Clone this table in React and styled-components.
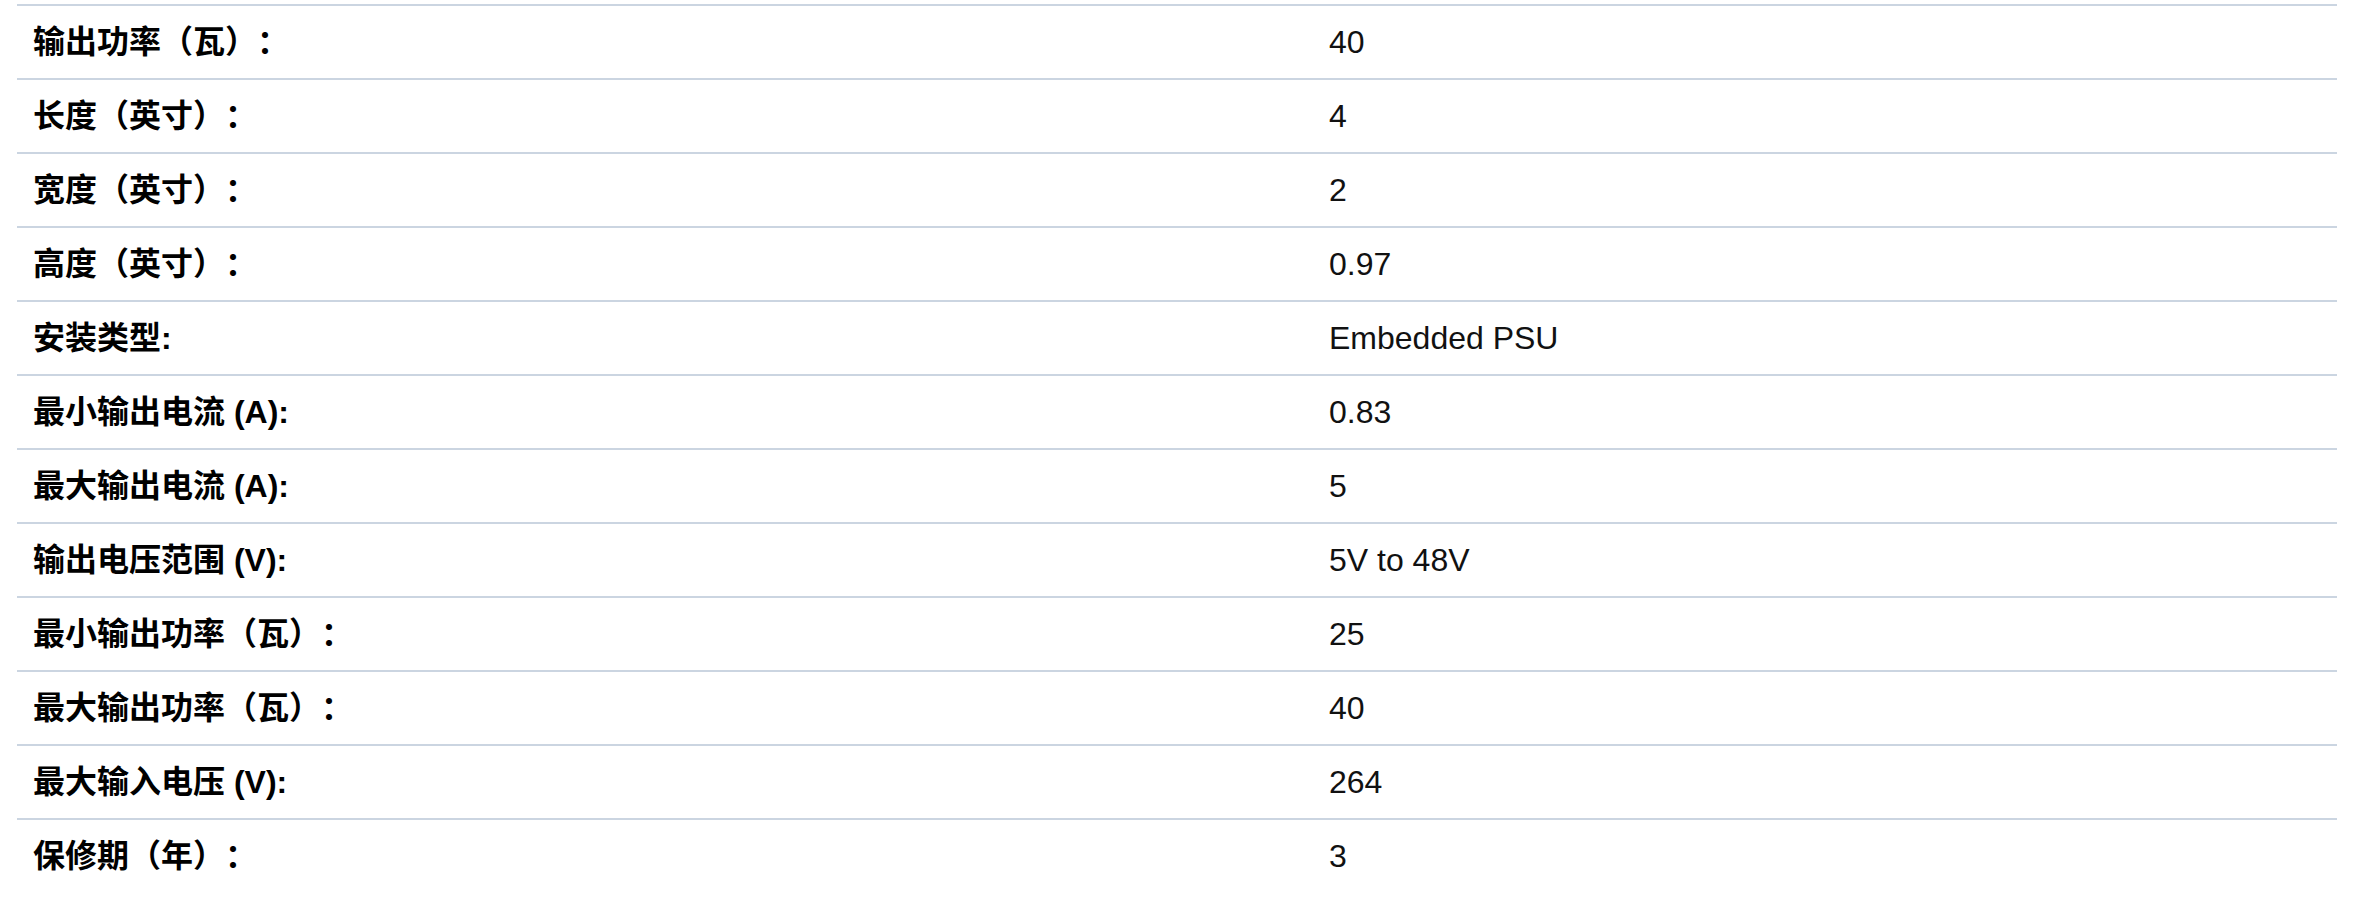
import React from "react";
import styled, { createGlobalStyle } from "styled-components";

const GlobalStyle = createGlobalStyle`
  body {
    margin: 0;
    background: #ffffff;
    font-family: "Liberation Sans", "Noto Sans CJK SC", sans-serif;
  }
`;

const Wrapper = styled.div`
  padding: 4px 0 0 17px;
`;

const SpecTable = styled.table`
  width: 2320px;
  border-collapse: collapse;
  table-layout: fixed;
`;

const Row = styled.tr`
  border-top: 2px solid #cbd5e1;
`;

const Label = styled.th`
  width: 1264px;
  height: 72px;
  padding: 0 16px;
  text-align: left;
  vertical-align: middle;
  font-family: "Liberation Sans", "Noto Sans CJK SC", sans-serif;
  font-size: 32px;
  line-height: 1.2;
  font-weight: 700;
  color: #000;
  text-spacing-trim: space-all;
`;

const Value = styled.td`
  height: 72px;
  padding: 0 16px;
  vertical-align: middle;
  font-family: "Liberation Sans", "Noto Sans CJK SC", sans-serif;
  font-size: 32px;
  line-height: 1.2;
  font-weight: 400;
  color: #111;
`;

const specs = [
  ["输出功率（瓦）：", "40"],
  ["长度（英寸）：", "4"],
  ["宽度（英寸）：", "2"],
  ["高度（英寸）：", "0.97"],
  ["安装类型:", "Embedded PSU"],
  ["最小输出电流 (A):", "0.83"],
  ["最大输出电流 (A):", "5"],
  ["输出电压范围 (V):", "5V to 48V"],
  ["最小输出功率（瓦）：", "25"],
  ["最大输出功率（瓦）：", "40"],
  ["最大输入电压 (V):", "264"],
  ["保修期（年）：", "3"],
];

export default function App() {
  return (
    <Wrapper>
      <GlobalStyle />
      <SpecTable>
        <tbody>
          {specs.map(([label, value]) => (
            <Row key={label}>
              <Label>{label}</Label>
              <Value>{value}</Value>
            </Row>
          ))}
        </tbody>
      </SpecTable>
    </Wrapper>
  );
}
